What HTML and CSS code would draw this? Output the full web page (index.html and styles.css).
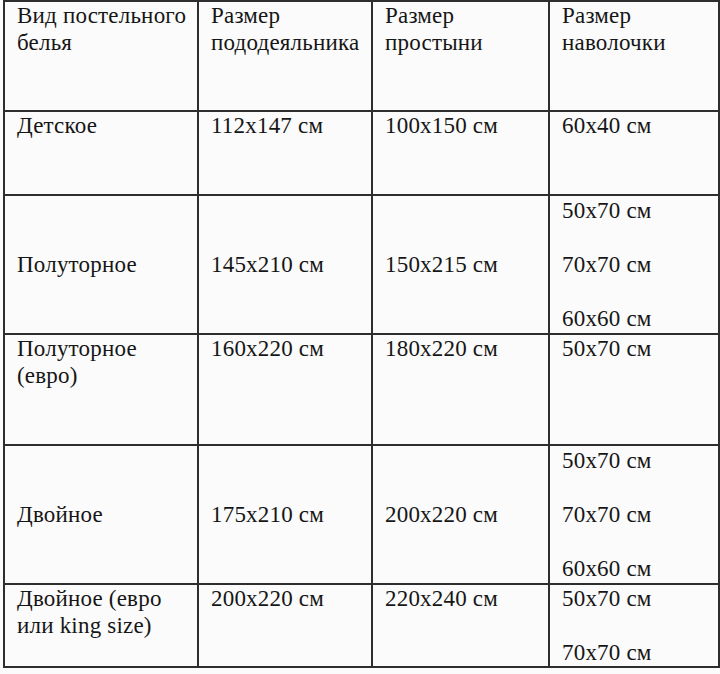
FILE: index.html
```html
<!DOCTYPE html>
<html lang="ru">
<head>
<meta charset="utf-8">
<link rel="stylesheet" href="styles.css">
</head>
<body>
<table class="sizes">
  <colgroup>
    <col class="c1"><col class="c2"><col class="c3"><col class="c4">
  </colgroup>
  <tr class="r-head">
    <td>Вид постельного белья</td>
    <td>Размер пододеяльника</td>
    <td>Размер простыни</td>
    <td>Размер наволочки</td>
  </tr>
  <tr class="r-kids">
    <td>Детское</td>
    <td>112x147 см</td>
    <td>100x150 см</td>
    <td>60x40 см</td>
  </tr>
  <tr class="r-tall mid">
    <td>Полуторное</td>
    <td>145x210 см</td>
    <td>150x215 см</td>
    <td><div class="pl">50x70 см</div><div class="pl">70x70 см</div><div class="pl">60x60 см</div></td>
  </tr>
  <tr class="r-euro">
    <td>Полуторное (евро)</td>
    <td>160x220 см</td>
    <td>180x220 см</td>
    <td>50x70 см</td>
  </tr>
  <tr class="r-tall mid">
    <td>Двойное</td>
    <td>175x210 см</td>
    <td>200x220 см</td>
    <td><div class="pl">50x70 см</div><div class="pl">70x70 см</div><div class="pl">60x60 см</div></td>
  </tr>
  <tr class="r-king">
    <td>Двойное (евро или king size)</td>
    <td>200x220 см</td>
    <td>220x240 см</td>
    <td><div class="pl">50x70 см</div><div class="pl">70x70 см</div></td>
  </tr>
</table>
</body>
</html>
```

FILE: styles.css
```css
html, body {
  margin: 0;
  padding: 0;
  background: #fbfbfb;
}

.sizes {
  margin: 0 0 0 3px;
  border-collapse: collapse;
  table-layout: fixed;
  width: 715px;
  font-family: "Liberation Serif", "DejaVu Serif", serif;
  font-size: 23px;
  line-height: 27px;
  letter-spacing: 0.2px;
  color: #161616;
}

.c1 { width: 194px; }
.c2 { width: 174px; }
.c3 { width: 177px; }
.c4 { width: 170px; }

.sizes td {
  border: 2px solid #2e2e2e;
  padding: 0 6px 0 12px;
  vertical-align: top;
}

.sizes tr.mid td {
  vertical-align: middle;
}

.r-head { height: 110px; }
.r-kids { height: 84px; }
.r-tall { height: 139px; }
.r-euro { height: 111px; }
.r-king { height: 83px; }

.pl + .pl {
  margin-top: 27px;
}
```
